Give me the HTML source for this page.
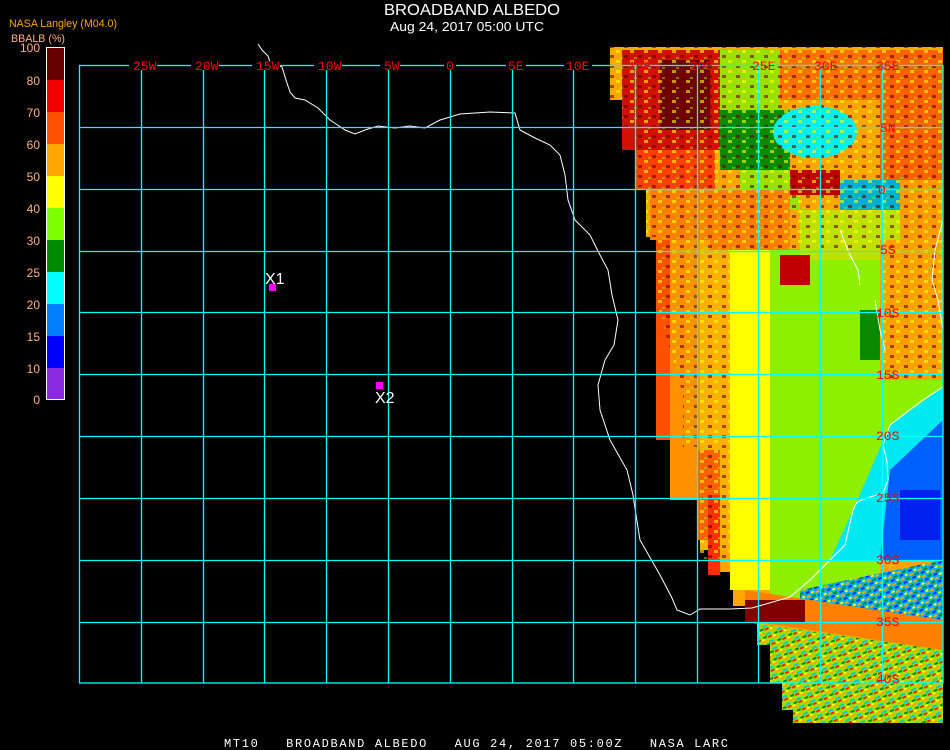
<!DOCTYPE html>
<html><head><meta charset="utf-8"><style>
html,body{margin:0;padding:0;background:#000;width:950px;height:750px;overflow:hidden}
svg{display:block}
.m{font-family:"Liberation Mono",monospace}
.s{font-family:"Liberation Sans",sans-serif}
</style></head><body>
<svg width="950" height="750" viewBox="0 0 950 750" xmlns="http://www.w3.org/2000/svg">
<defs>
<pattern id="noise" width="12" height="8" patternUnits="userSpaceOnUse" patternTransform="rotate(-25)">
<rect width="12" height="8" fill="#9be000"/>
<rect x="0" y="0" width="5" height="2" fill="#ffa500"/>
<rect x="6" y="2" width="5" height="2" fill="#00c8e0"/>
<rect x="2" y="4" width="4" height="2" fill="#0a8a00"/>
<rect x="7" y="5" width="4" height="2" fill="#ff2000"/>
<rect x="0" y="6" width="3" height="2" fill="#ffff00"/>
</pattern>
<pattern id="noise2" width="10" height="8" patternUnits="userSpaceOnUse" patternTransform="rotate(-30)">
<rect width="10" height="8" fill="#00b0f0"/>
<rect x="0" y="0" width="4" height="2" fill="#ffa500"/>
<rect x="5" y="2" width="4" height="2" fill="#0a8a00"/>
<rect x="1" y="4" width="4" height="2" fill="#1030ff"/>
<rect x="6" y="6" width="3" height="2" fill="#ffff00"/>
</pattern>
<pattern id="mott" width="14" height="10" patternUnits="userSpaceOnUse">
<rect x="0" y="0" width="4" height="3" fill="#ffff00" opacity=".6"/>
<rect x="8" y="5" width="4" height="3" fill="#700000" opacity=".6"/>
<rect x="4" y="7" width="3" height="2" fill="#8ef000" opacity=".5"/>
</pattern>
</defs>
<rect width="950" height="750" fill="#000"/>

<polygon fill="#ffa500" points="610,47 943,47 943,723 793,723 793,710 782,710 782,683 770,683 770,645 757,645 757,622 745,622 745,606 733,606 733,572 720,572 720,535 708,535 708,495 697,495 697,447 683,447 683,395 680,380 670,340 660,320 656,300 656,237 646,237 646,187 635,187 635,127 622,127 622,100 610,100"/>
<rect x="622" y="50" width="100" height="100" fill="#d01000"/>
<rect x="660" y="60" width="50" height="70" fill="#700000"/>
<rect x="635" y="150" width="80" height="40" fill="#ff4000"/>
<rect x="720" y="50" width="60" height="60" fill="#9be000"/>
<rect x="780" y="50" width="100" height="50" fill="#ff7000"/>
<rect x="880" y="50" width="63" height="130" fill="#ff6000"/>
<rect x="720" y="110" width="70" height="60" fill="#0a8a00"/>
<rect x="740" y="170" width="60" height="40" fill="#9be000"/>
<ellipse cx="815" cy="132" rx="42" ry="26" fill="#00f0f0"/>
<rect x="790" y="170" width="50" height="25" fill="#c00000"/>
<rect x="840" y="180" width="60" height="40" fill="#00b0d0"/>
<rect x="650" y="190" width="60" height="50" fill="#ff8000"/>
<rect x="710" y="190" width="80" height="60" fill="#ff8000"/>
<rect x="900" y="180" width="43" height="200" fill="#ff9a00"/>
<rect x="656" y="240" width="14" height="200" fill="#ff5000"/>
<rect x="670" y="240" width="30" height="260" fill="#ff9000"/>
<rect x="700" y="250" width="30" height="300" fill="#ffb000"/>
<rect x="730" y="250" width="40" height="340" fill="#ffff00"/>
<rect x="770" y="250" width="110" height="350" fill="#8ef000"/>
<rect x="800" y="210" width="100" height="50" fill="#c0e000"/>
<rect x="780" y="255" width="30" height="30" fill="#c00000"/>
<rect x="860" y="310" width="40" height="50" fill="#0a8a00"/>
<rect x="880" y="240" width="63" height="140" fill="#ffa000"/>
<rect x="880" y="380" width="63" height="80" fill="#8ef000"/>
<rect x="697" y="450" width="23" height="90" fill="#ff6000"/>
<rect x="708" y="495" width="12" height="80" fill="#ff3000"/>
<polygon fill="url(#mott)" points="610,47 943,47 943,380 880,380 880,250 730,250 730,560 697,560 697,447 683,447 683,395 656,300 656,237 646,237 646,187 635,187 635,127 622,127 622,100 610,100"/>
<polygon fill="#00e8f0" points="853,510 890,425 943,387 943,560 830,560"/>
<polygon fill="#0060ff" points="890,470 943,420 943,560 880,560"/>
<rect x="900" y="490" width="40" height="50" fill="#0020f0"/>
<polygon fill="url(#noise2)" points="800,590 943,560 943,640 800,620"/>
<polygon fill="#ff8000" points="745,590 943,620 943,650 745,620"/>
<rect x="745" y="600" width="60" height="22" fill="#800000"/>
<polygon fill="url(#noise)" points="745,622 943,650 943,723 793,723 793,710 782,710 782,683 770,683 770,645 757,645 757,622"/>

<polyline fill="none" stroke="#fff" stroke-width="1" points="258,44 262,50 268,56 270,62 282,67 286,80 290,92 295,98 305,100 318,108 330,120 345,130 355,134 365,130 378,126 395,128 410,126 425,128 440,120 460,114 490,112 515,113 520,130 535,138 550,145 560,155 565,175 568,200 575,220 590,235 600,255 608,270 612,295 618,320 614,345 605,360 598,385 600,410 610,440 627,470 633,495 636,515 640,540 660,575 672,598 677,610 690,615 700,609 730,609 752,608 790,597 810,580 830,560 845,545 853,510 857,502 867,498 883,493 888,480 887,462 883,445 890,425 907,412 923,400 943,387"/>
<polyline fill="none" stroke="#fff" stroke-width="1" points="840,230 850,255 858,270 860,285"/>
<polyline fill="none" stroke="#fff" stroke-width="1" points="875,300 880,330 885,350"/>
<polyline fill="none" stroke="#fff" stroke-width="1" points="943,220 935,250 932,280 938,300 943,330"/>

<g stroke="#00ffff" stroke-width="1.3" fill="none">
<rect x="79.5" y="65.5" width="863.5" height="617.5"/>
<line x1="141.5" y1="65" x2="141.5" y2="683"/>
<line x1="203.5" y1="65" x2="203.5" y2="683"/>
<line x1="264.5" y1="65" x2="264.5" y2="683"/>
<line x1="326.5" y1="65" x2="326.5" y2="683"/>
<line x1="388.5" y1="65" x2="388.5" y2="683"/>
<line x1="450.5" y1="65" x2="450.5" y2="683"/>
<line x1="512.5" y1="65" x2="512.5" y2="683"/>
<line x1="573.5" y1="65" x2="573.5" y2="683"/>
<line x1="635.5" y1="65" x2="635.5" y2="683"/>
<line x1="697.5" y1="65" x2="697.5" y2="683"/>
<line x1="758.5" y1="65" x2="758.5" y2="683"/>
<line x1="820.5" y1="65" x2="820.5" y2="683"/>
<line x1="882.5" y1="65" x2="882.5" y2="683"/>
<line x1="79" y1="127.5" x2="943" y2="127.5"/>
<line x1="79" y1="189.5" x2="943" y2="189.5"/>
<line x1="79" y1="251.5" x2="943" y2="251.5"/>
<line x1="79" y1="312.5" x2="943" y2="312.5"/>
<line x1="79" y1="374.5" x2="943" y2="374.5"/>
<line x1="79" y1="436.5" x2="943" y2="436.5"/>
<line x1="79" y1="498.5" x2="943" y2="498.5"/>
<line x1="79" y1="560.5" x2="943" y2="560.5"/>
<line x1="79" y1="622.5" x2="943" y2="622.5"/>
</g>
<g fill="#000">
<rect x="129" y="61" width="28" height="9"/><rect x="191" y="61" width="28" height="9"/>
<rect x="252" y="61" width="28" height="9"/><rect x="314" y="61" width="28" height="9"/>
<rect x="380" y="61" width="20" height="9"/><rect x="444" y="61" width="12" height="9"/>
<rect x="506" y="61" width="20" height="9"/><rect x="564" y="61" width="28" height="9"/>
</g>
<g fill="#ff0000" font-size="13" class="m">
<text x="133" y="70">25W</text><text x="195" y="70">20W</text><text x="256" y="70">15W</text>
<text x="318" y="70">10W</text><text x="384" y="70">5W</text><text x="446" y="70">0</text>
<text x="508" y="70">5E</text><text x="566" y="70">10E</text><text x="628" y="70">15E</text>
<text x="690" y="70">20E</text><text x="752" y="70">25E</text><text x="814" y="70">30E</text>
<text x="876" y="70">35E</text>
<text x="880" y="132">5N</text><text x="878" y="194">0</text><text x="880" y="254">5S</text>
<text x="876" y="317">10S</text><text x="876" y="379">15S</text><text x="876" y="440">20S</text>
<text x="876" y="502">25S</text><text x="876" y="564">30S</text><text x="876" y="626">35S</text>
<text x="876" y="683">40S</text>
</g>

<rect x="269" y="284" width="7" height="7" fill="#ff00ff"/>
<rect x="376" y="382" width="7" height="7" fill="#ff00ff"/>
<text x="265" y="284" fill="#fff" font-size="16" class="s">X1</text>
<text x="375" y="403" fill="#fff" font-size="16" class="s">X2</text>

<text x="472" y="15" fill="#fff" font-size="16" text-anchor="middle" class="s" textLength="176" lengthAdjust="spacingAndGlyphs">BROADBAND ALBEDO</text>
<text x="467" y="31" fill="#fff" font-size="13" text-anchor="middle" class="s" textLength="154" lengthAdjust="spacingAndGlyphs">Aug 24, 2017 05:00 UTC</text>
<text x="9" y="27" fill="#ffa500" font-size="11" class="s" textLength="108" lengthAdjust="spacingAndGlyphs">NASA Langley (M04.0)</text>
<text x="11" y="42" fill="#ffb080" font-size="11" class="s" textLength="54" lengthAdjust="spacingAndGlyphs">BBALB (%)</text>

<rect x="46" y="47" width="19" height="353" fill="#fff"/>
<rect x="47" y="48" width="17" height="32" fill="#660000"/>
<rect x="47" y="80" width="17" height="32" fill="#f00000"/>
<rect x="47" y="112" width="17" height="32" fill="#ff5000"/>
<rect x="47" y="144" width="17" height="32" fill="#ffa500"/>
<rect x="47" y="176" width="17" height="32" fill="#ffff00"/>
<rect x="47" y="208" width="17" height="32" fill="#80ff00"/>
<rect x="47" y="240" width="17" height="32" fill="#008a00"/>
<rect x="47" y="272" width="17" height="32" fill="#00ffff"/>
<rect x="47" y="304" width="17" height="32" fill="#0080ff"/>
<rect x="47" y="336" width="17" height="32" fill="#0000ff"/>
<rect x="47" y="368" width="17" height="31" fill="#8a2be2"/>
<g fill="#ffb080" font-size="12" class="s" text-anchor="end">
<text x="40" y="52">100</text><text x="40" y="85">80</text><text x="40" y="117">70</text>
<text x="40" y="149">60</text><text x="40" y="181">50</text><text x="40" y="213">40</text>
<text x="40" y="245">30</text><text x="40" y="277">25</text><text x="40" y="309">20</text>
<text x="40" y="341">15</text><text x="40" y="373">10</text><text x="40" y="404">0</text>
</g>

<text x="224" y="747" fill="#fff" font-size="12" class="m" textLength="504" xml:space="preserve">MT10   BROADBAND ALBEDO   AUG 24, 2017 05:00Z   NASA LARC</text>
</svg>
</body></html>
